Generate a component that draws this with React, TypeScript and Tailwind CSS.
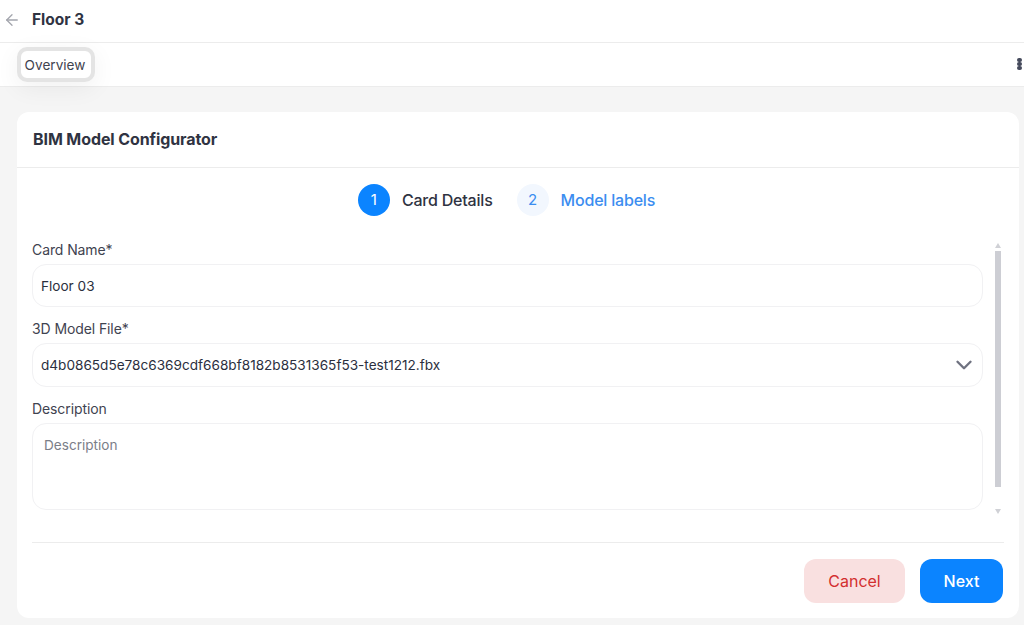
import { ArrowLeft, ChevronDown } from 'lucide-react';

const fieldClass = 'w-full rounded-[14px] border border-[#f1f1f3] bg-white text-[13.6px] text-[#2b2f3e]';

const Label = ({ children }: { children: string }) => (
  <div className="text-[14px] leading-[20px] text-[#3f4350] tracking-[-0.1px]">{children}</div>
);

export default function App() {
  return (
    <div className="h-[625px] w-[1024px] overflow-hidden bg-[#f5f5f5] font-['Inter',sans-serif]">
      <header className="flex h-[43px] items-center border-b border-[#ececec] bg-white pb-[2px] pl-[3px]">
        <ArrowLeft className="h-[18px] w-[18px] text-[#a3a5ad]" strokeWidth={1.75} />
        <span className="ml-[11px] text-[15.5px] font-bold text-[#2f3342]">Floor 3</span>
      </header>

      <div className="flex h-[44px] items-center justify-between border-b border-[#ececec] bg-white pl-[17px] pr-[2px]">
        <button className="h-[35px] w-[78px] rounded-[10px] border-[4px] border-[#e4e4e4] bg-white pt-[2px] pr-[2px] text-[13.6px] leading-none text-[#3f4350] shadow-[0_6px_24px_rgba(0,0,0,0.06)]">
          Overview
        </button>
        <div className="mb-[2px] flex flex-col">
          <span className="h-[4px] w-[5px] rounded-full bg-[#454a5c]" />
          <span className="h-[4px] w-[5px] rounded-full bg-[#454a5c]" />
          <span className="h-[4px] w-[5px] rounded-full bg-[#454a5c]" />
        </div>
      </div>

      <div className="pl-[17px] pt-[25px]">
        <section className="flex h-[506px] w-[1002px] flex-col rounded-[12px] bg-white">
          <div className="flex h-[56px] items-center border-b border-[#ececec] pb-[2px] pl-[16px]">
            <h1 className="text-[16px] font-bold tracking-[-0.1px] text-[#2f3342]">BIM Model Configurator</h1>
          </div>

          <div className="flex h-[64px] items-center justify-center pr-[23px]">
            <span className="flex h-[32px] w-[32px] items-center justify-center rounded-full bg-[#0b84ff] text-[15px] text-white">1</span>
            <span className="ml-[12px] text-[16px] font-medium tracking-[-0.2px] text-[#2f3342]">Card Details</span>
            <span className="ml-[24px] flex h-[32px] w-[32px] items-center justify-center rounded-full bg-[#f2f7fe] text-[15px] text-[#3b8df0]">2</span>
            <span className="ml-[12px] text-[16px] font-medium tracking-[-0.2px] text-[#3b8df0]">Model labels</span>
          </div>

          <div className="flex flex-1 pl-[15px] pr-[18px]">
            <form className="w-[952px]">
              <div className="pt-[8px]"><Label>Card Name*</Label></div>
              <div className={`${fieldClass} mt-[4px] flex h-[43px] items-center pl-[8px] pt-[1px]`}>Floor 03</div>
              <div className="mt-[12px]"><Label>3D Model File*</Label></div>
              <div className={`${fieldClass} mt-[4px] flex h-[44px] items-center justify-between pl-[8px] pr-[5px]`}>
                <span>d4b0865d5e78c6369cdf668bf8182b8531365f53-test1212.fbx</span>
                <ChevronDown className="h-[26px] w-[26px] text-[#6f7280]" strokeWidth={2.2} />
              </div>
              <div className="mt-[12px]"><Label>Description</Label></div>
              <div className={`${fieldClass} mt-[4px] h-[87px] pl-[11px] pt-[11px] text-[#7b7e88]`}>Description</div>
            </form>
            <div className="ml-[11px] flex w-[7px] flex-col items-center pt-[11px]">
              <span className="h-0 w-0 border-x-[3.5px] border-b-[5px] border-x-transparent border-b-[#d0d1d6]" />
              <span className="mt-[3px] h-[236px] w-[6px] bg-[#cdced4]" />
              <span className="mt-[22px] h-0 w-0 border-x-[3.5px] border-t-[5px] border-x-transparent border-t-[#d0d1d6]" />
            </div>
          </div>

          <div className="mx-[15px] flex h-[76px] items-end justify-end gap-[15px] border-t border-[#ececec] pb-[15px] pr-[1px]">
            <button className="h-[44px] w-[101px] rounded-[12px] bg-[#f9e0e0] text-[16px] text-[#d32f2f]">Cancel</button>
            <button className="h-[44px] w-[83px] rounded-[12px] bg-[#0b84ff] text-[16px] font-medium text-white">Next</button>
          </div>
        </section>
      </div>
    </div>
  );
}
